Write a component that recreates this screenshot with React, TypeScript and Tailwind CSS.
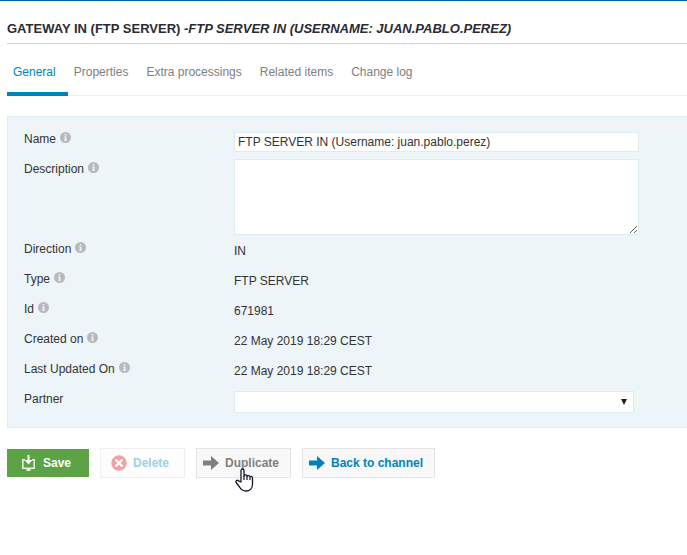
import type { ReactNode } from "react";

function InfoIcon() {
  return (
    <svg className="h-[11px] w-[11px] shrink-0" viewBox="0 0 11 11" aria-hidden="true">
      <circle cx="5.5" cy="5.5" r="5.5" fill="#b9b9b9" />
      <path d="M4.700 2h1.700v1.400H4.700zM4.100 4.400h2.300v3.400h.6v1H4V7.800h.8V5.400h-.7z" fill="#eef5f9" />
    </svg>
  );
}

function SaveIcon() {
  return (
    <svg className="h-4 w-[13px] shrink-0" viewBox="0 0 13 16" aria-hidden="true">
      <path d="M3 4.700H.8v8.600h11.400V4.700H10" fill="none" stroke="#e4f1dc" strokeWidth="1.600" />
      <path d="M4.500 14h4v2h-4z" fill="#e4f1dc" />
      <path d="M5.500 0h2v5h3l-4 4.500-4-4.500h3z" fill="#fff" />
    </svg>
  );
}

function DeleteIcon() {
  return (
    <svg className="h-4 w-4 shrink-0" viewBox="0 0 16 16" aria-hidden="true">
      <circle cx="8" cy="8" r="7.700" fill="#f2a1a3" />
      <path d="M5.300 5.300l5.400 5.400M10.700 5.300l-5.400 5.400" stroke="#fff" strokeWidth="2.300" strokeLinecap="square" />
    </svg>
  );
}

function ArrowIcon() {
  return (
    <svg className="h-[14px] w-4 shrink-0" viewBox="0 0 16 14" aria-hidden="true">
      <path d="M0 4.500h8V0l8 7-8 7V9.500H0z" fill="currentColor" />
    </svg>
  );
}

function HandCursor() {
  return (
    <svg
      className="pointer-events-none absolute top-[19px] left-[38px] h-6 w-[19px]"
      viewBox="0 0 19 24"
      aria-hidden="true"
    >
      <path
        d="M6 14V2.500C6 .5 9 .5 9 2.500v5.700c0-1.700 3-1.700 3 .3 0-1.500 3-1.300 3 .7 0-1.200 2.500-1 2.500.8v6c0 4-2.500 7-6.500 7-3.500 0-5-1.500-6.500-4L1.200 14.500c-1-1.800 1-3 2.300-1.700z"
        fill="#fff"
        stroke="#15152a"
        strokeWidth="1.300"
        strokeLinejoin="round"
      />
      <path d="M9 8v4M12 8.500V12M15 9.500V12" stroke="#15152a" strokeWidth="1.200" />
    </svg>
  );
}

function Row({ label, htmlFor, info = true, children }: {
  label: string;
  htmlFor?: string;
  info?: boolean;
  children: ReactNode;
}) {
  return (
    <div className="flex min-h-[30px]">
      <div className="flex w-[210px] shrink-0 items-start gap-1 pt-[3px]">
        {htmlFor ? <label htmlFor={htmlFor}>{label}</label> : <span>{label}</span>}
        {info && <InfoIcon />}
      </div>
      {children}
    </div>
  );
}

const tabs = ["Properties", "Extra processings", "Related items", "Change log"];

const details = [
  ["Direction", "IN"],
  ["Type", "FTP SERVER"],
  ["Id", "671981"],
  ["Created on", "22 May 2019 18:29 CEST"],
  ["Last Updated On", "22 May 2019 18:29 CEST"],
];

export default function App() {
  return (
    <div className="min-h-screen border-t border-[#00659c] bg-white pl-[7px] font-['Liberation_Sans',Arial,sans-serif] text-[12px] leading-[15px] text-[#333]">
      <h1 className="border-b border-[#ccd0d0] pt-[18px] pb-[4px] text-[13px] leading-5 font-bold text-[#2b2b33]">
        GATEWAY IN (FTP SERVER) -<em>FTP SERVER IN (USERNAME: JUAN.PABLO.PEREZ)</em>
      </h1>

      <nav className="mt-[21px] flex border-b border-[#f0f0f0] text-[#808080]">
        <a href="#general" className="-mb-px border-b-4 border-[#0083bd] pr-3 pb-3 pl-[6px] text-[#0083bd]">
          General
        </a>
        {tabs.map((tab) => (
          <a key={tab} href="#tab" className="pr-3 pl-[6px]">
            {tab}
          </a>
        ))}
      </nav>

      <form onSubmit={(e) => e.preventDefault()}>
        <div className="mt-5 border border-r-0 border-[#dcecf5] bg-[#edf5f9] px-4 pt-3 pb-2">
          <Row label="Name" htmlFor="name">
            <input
              id="name"
              type="text"
              defaultValue="FTP SERVER IN (Username: juan.pablo.perez)"
              className="mt-[3px] h-5 w-[405px] border border-[#dfebf3] bg-white px-[3px]"
            />
          </Row>
          <Row label="Description" htmlFor="description">
            <textarea
              id="description"
              className="mb-1 block h-[76px] w-[405px] resize border border-[#dfebf3] bg-white px-[3px]"
            />
          </Row>
          {details.map(([label, value]) => (
            <Row key={label} label={label}>
              <span className="pt-[5px]">{value}</span>
            </Row>
          ))}
          <Row label="Partner" htmlFor="partner" info={false}>
            <div className="relative mt-[2px] h-[22px] w-[400px]">
              <select id="partner" className="block h-full w-full appearance-none border border-[#dfebf3] bg-white px-[3px]">
                <option value="" />
              </select>
              <svg className="pointer-events-none absolute top-2 right-[7px] h-[6px] w-[6px]" viewBox="0 0 6 6" aria-hidden="true">
                <path d="M0 0h6L3 6z" fill="#222" />
              </svg>
            </div>
          </Row>
        </div>

        <div className="mt-5 flex items-center gap-[11px] font-bold">
          <button type="submit" className="flex h-7 w-[82px] items-center gap-2 bg-[#5ba345] pl-[15px] text-white">
            <SaveIcon />
            Save
          </button>
          <button type="button" disabled className="flex h-[30px] w-[85px] items-center gap-[6px] border border-[#f0f0f0] bg-[#fdfdfd] pl-[10px] text-[#a0d0e6]">
            <DeleteIcon />
            Delete
          </button>
          <button type="button" className="relative flex h-[30px] w-[95px] items-center gap-[6px] border border-[#e4e4e4] bg-[#f8f8f8] pl-[6px] text-[#808080]">
            <ArrowIcon />
            Duplicate
            <HandCursor />
          </button>
          <button type="button" className="flex h-[30px] w-[133px] items-center gap-[6px] border border-[#e4e4e4] bg-[#f8f8f8] pl-[6px] text-[#0083bd]">
            <ArrowIcon />
            Back to channel
          </button>
        </div>
      </form>
    </div>
  );
}
